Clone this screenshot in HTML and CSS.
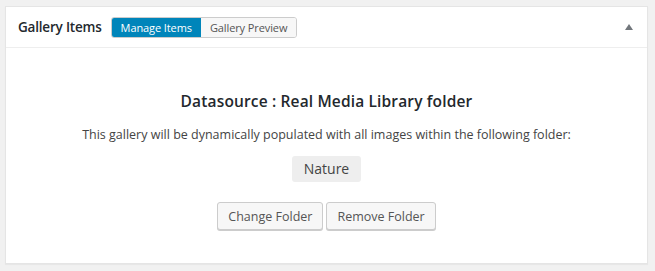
FILE: index.html
```html
<!DOCTYPE html>
<html lang="en">
    <head>
        <meta charset="UTF-8">
        <title>Gallery Items</title>
        <link rel="stylesheet" href="styles.css">
    </head>
    <body>
        <div class="postbox">
            <div class="postbox-header">
                <h2>Gallery Items</h2>
                <div class="tabs">
                    <span class="tab active">Manage Items</span>
                    <span class="tab">Gallery Preview</span>
                </div>
                <span class="toggle"></span>
            </div>
            <div class="inside">
                <h3>Datasource : Real Media Library folder</h3>
                <p>This gallery will be dynamically populated with all images within the following folder:</p>
                <div class="folder">Nature</div>
                <div class="actions">
                    <button>Change Folder</button>
                    <button>Remove Folder</button>
                </div>
            </div>
        </div>
    </body>
</html>
```

FILE: styles.css
```css
body {
    margin: 0;
    padding: 6px 7px 7px 5px;
    background: #f1f1f1;
    font-family: "Open Sans", sans-serif;
    color: #23282d;
}
.postbox {
    background: #fff;
    border: 1px solid #e5e5e5;
    box-shadow: 0 1px 1px rgba(0, 0, 0, 0.04);
    height: 256px;
}
.postbox-header {
    display: flex;
    align-items: center;
    height: 40px;
    padding: 0 12px 0 12px;
    border-bottom: 1px solid #eee;
}
.postbox-header h2 {
    margin: 0;
    font-size: 13.5px;
    font-weight: 600;
    letter-spacing: -0.2px;
}
.tabs {
    display: flex;
    margin-left: 9px;
    border: 1px solid #ccc;
    border-radius: 3px;
    overflow: hidden;
}
.tab {
    font-size: 11px;
    line-height: 19px;
    padding: 0 9px 0 9px;
    background: #f7f7f7;
    color: #555;
    letter-spacing: -0.1px;
}
.tab.active {
    background: #0085ba;
    color: #fff;
}
.toggle {
    margin-left: auto;
    margin-right: 2px;
    width: 0;
    height: 0;
    border-left: 4px solid transparent;
    border-right: 4px solid transparent;
    border-bottom: 6px solid #72777c;
}
.inside {
    text-align: center;
    padding-top: 42px;
}
.inside h3 {
    margin: 0;
    font-size: 15.5px;
    font-weight: 600;
    line-height: 22px;
    letter-spacing: 0.15px;
}
.inside p {
    margin: 14px 0 0;
    font-size: 12.5px;
    line-height: 18px;
    color: #444;
}
.folder {
    display: inline-block;
    margin-top: 12px;
    padding: 0 12px;
    background: #eee;
    border-radius: 3px;
    font-size: 14px;
    line-height: 26px;
    color: #444;
}
.actions {
    display: flex;
    justify-content: center;
    gap: 3px;
    margin-top: 20px;
}
button {
    font-family: "Open Sans", sans-serif;
    font-size: 12.5px;
    height: 28px;
    padding: 0 10px;
    background: #f7f7f7;
    color: #555;
    border: 1px solid #ccc;
    border-radius: 3px;
    box-shadow: 0 1px 0 #ccc;
}
```
